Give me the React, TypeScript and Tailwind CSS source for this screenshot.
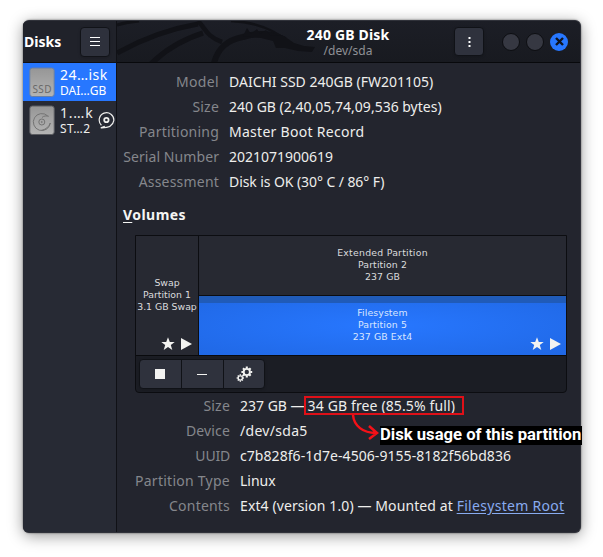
import React from 'react'

type Row = { label: string; value: React.ReactNode; labelClass: string; valueClass: string }

const driveRows: Row[] = [
	{ label: 'Model', value: 'DAICHI SSD 240GB (FW201105)', labelClass: 'tracking-[0.35px]', valueClass: '' },
	{ label: 'Size', value: '240 GB (2,40,05,74,09,536 bytes)', labelClass: 'tracking-[0.2px]', valueClass: '' },
	{ label: 'Partitioning', value: 'Master Boot Record', labelClass: 'tracking-[0.22px]', valueClass: 'tracking-[0.28px]' },
	{ label: 'Serial Number', value: '2021071900619', labelClass: 'tracking-[0.08px]', valueClass: '' },
	{ label: 'Assessment', value: 'Disk is OK (30° C / 86° F)', labelClass: 'tracking-[0.2px]', valueClass: 'tracking-[-0.08px]' },
]

const volumeRows: Row[] = [
	{
		label: 'Size',
		value: (
			<>
				<span>237 GB —</span>
				<span className="ml-[3px] tracking-[0.13px]">34 GB free (85.5% full)</span>
			</>
		),
		labelClass: 'tracking-[0.2px]',
		valueClass: '',
	},
	{ label: 'Device', value: '/dev/sda5', labelClass: 'tracking-[0.15px]', valueClass: 'tracking-[0.3px]' },
	{ label: 'UUID', value: 'c7b828f6-1d7e-4506-9155-8182f56bd836', labelClass: 'tracking-[-0.2px]', valueClass: 'tracking-[0.06px]' },
	{ label: 'Partition Type', value: 'Linux', labelClass: 'tracking-[0.26px]', valueClass: '' },
	{
		label: 'Contents',
		value: (
			<>
				Ext4 (version 1.0) — Mounted at{' '}
				<a className="tracking-[0.3px] text-[#88abf0] underline underline-offset-2">Filesystem Root</a>
			</>
		),
		labelClass: 'tracking-[0.2px]',
		valueClass: 'tracking-[0.1px]',
	},
]

function Details({ rows, labelWidth }: { rows: Row[]; labelWidth: string }) {
	return (
		<dl>
			{rows.map((row) => (
				<div key={row.label} className="flex h-[25px] items-center whitespace-nowrap text-[14px] leading-[25px]">
					<dt className={`flex shrink-0 justify-end text-[#85878c] ${labelWidth}`}>
						<span className={row.labelClass}>{row.label}</span>
					</dt>
					<dd className={`ml-2.5 text-[#eeeeec] ${row.valueClass}`}>{row.value}</dd>
				</div>
			))}
		</dl>
	)
}

function Marks() {
	return (
		<svg width="32" height="14" viewBox="0 0 32 14" fill="#f3f3f1">
			<path d="M7 .3 8.8 5h4.9L9.8 8l1.5 5L7 10.1 2.7 13l1.5-5L.3 5h4.9z" />
			<path d="M20 1v12l11-6z" />
		</svg>
	)
}

function Gear({ x, y, r }: { x: number; y: number; r: number }) {
	return (
		<g transform={`translate(${x} ${y}) scale(${r / 5})`} stroke="#f3f3f1" fill="none">
			<circle r="3" strokeWidth="1.8" />
			{[0, 45, 90, 135, 180, 225, 270, 315].map((a) => (
				<path key={a} d="M0-3.5V-5.2" strokeWidth="2" transform={`rotate(${a})`} />
			))}
		</g>
	)
}

function Dragon() {
	return (
		<svg className="absolute left-0 top-0" width="200" height="41" viewBox="0 0 200 41" fill="none" stroke="#111217">
			<path d="M0 4Q10 1 22 0" strokeWidth="3" />
			<path d="M0 32C18 22 46 9 81 3" strokeWidth="5" />
			<path d="M34 43C46 31 64 19 86 12" strokeWidth="5.5" />
			<path d="M81 0C88 7 90 16 105 21" strokeWidth="4.5" />
			<path d="M97 42C101 27 110 19 126 16C143 11 154 12 168 19" strokeWidth="6" />
			<path d="M114 0C139 1 158 9 173 22" strokeWidth="2.5" />
			<path
				d="m126 15 4-8 4 6 6-5 3 5 6-4 4 5 14 1 10 7 10 3 11 1-3 5-14-1-13-3-9 0-3-7-12-3z"
				fill="#111217"
				strokeWidth="0"
			/>
		</svg>
	)
}

function DriveIcon({ ssd }: { ssd?: boolean }) {
	return (
		<svg className="shrink-0" width="26" height="31" viewBox="0 0 26 31">
			<defs>
				<linearGradient id="drive" x2="0" y2="1">
					<stop stopColor="#969696" />
					<stop offset="1" stopColor="#b4b4b4" />
				</linearGradient>
			</defs>
			<rect x=".8" y="1" width="24.4" height="28.5" rx="2.5" fill="url(#drive)" stroke={ssd ? '#667fa9' : '#5b5c61'} />
			{ssd ? (
				<text x="13" y="25.5" textAnchor="middle" fontSize="10" textLength="19" fill="#696969" className="font-['Noto_Sans']">
					SSD
				</text>
			) : (
				<g fill="none" stroke="#747474">
					<path d="M18.6 10.8A8.5 8.5 0 1 0 21.3 18c-1.4 4-4.6 6.5-8.8 7.3" />
					<path d="M13 12.5c1.5-1.6 4.5-2 6.8-1.2" />
					<circle cx="12.8" cy="17" r="3" />
					<circle cx="12.8" cy="17" r=".5" />
				</g>
			)}
		</svg>
	)
}

export default function App() {
	return (
		<div className="h-[557px] w-[603px] overflow-hidden bg-white pl-[23px] pt-[20px] font-['Noto_Sans',sans-serif]">
			<div className="relative h-[513px] w-[558px] rounded-[7px] shadow-[0_3px_15px_rgba(0,0,0,0.4),0_0_2px_rgba(0,0,0,0.6)]">
				<div className="flex h-full w-full overflow-hidden rounded-[6px] border border-[#30323a] border-l-0 bg-[#23252e]">
					<aside className="flex w-[94px] shrink-0 flex-col border-r border-[#101116] bg-[#272a34]">
						<div className="flex h-[42px] shrink-0 items-center justify-between border-b border-[#101116] bg-[#20222a] pl-px pr-1.5">
							<h1 className="whitespace-nowrap text-[14px] font-bold text-white">Disks</h1>
							<button className="flex h-[30px] w-[30px] items-center justify-center rounded-[4px] border border-[#111318] bg-[#2e313c] shadow-sm">
								<svg width="12" height="12" viewBox="0 0 12 12" stroke="#fff">
									<path d="M1 1.5h10M1 5.5h10M1 9.5h10" />
								</svg>
							</button>
						</div>
						<div className="flex h-[38px] shrink-0 items-center bg-[#2777ff] pl-1.5 text-white">
							<DriveIcon ssd />
							<div className="ml-[5px] whitespace-nowrap">
								<p className="text-[14px] leading-[17px] tracking-[0.45px]">24…isk</p>
								<p className="text-[12px] leading-[15px]">DAI…GB</p>
							</div>
						</div>
						<div className="flex h-[38px] shrink-0 items-center pl-1.5 text-[#eeeeec]">
							<DriveIcon />
							<div className="ml-[5px] w-[38px] whitespace-nowrap">
								<p className="text-[14px] leading-[17px] tracking-[0.8px]">1.…k</p>
								<p className="text-[12px] leading-[15px] tracking-[0.4px]">ST…2</p>
							</div>
							<svg width="17" height="17" viewBox="0 0 17 17" fill="none" stroke="#eeeeec" strokeWidth="1.2">
								<path d="M3.4 13.2A7.3 7.3 0 1 1 15.8 8.6C15 13.5 10.5 16 2.8 15.8l4-1.6" />
								<circle cx="8.4" cy="8" r="2.2" strokeWidth="1.8" />
							</svg>
						</div>
					</aside>

					<main className="flex min-w-0 flex-1 flex-col">
						<header className="relative flex h-[42px] shrink-0 items-center justify-end border-b border-[#08090c] bg-gradient-to-b from-[#1c1e26] to-[#181a20] pr-3">
							<Dragon />
							<div className="relative mr-[64px] w-[84px] whitespace-nowrap text-center">
								<h2 className="text-[14px] font-bold leading-[17px] tracking-[0.18px] text-white">240 GB Disk</h2>
								<p className="text-[12px] leading-[15px] text-[#909196]">/dev/sda</p>
							</div>
							<button className="mr-[18px] flex h-[29px] w-[30px] items-center justify-center rounded-[4px] border border-[#101217] bg-[#2f323d] shadow-sm">
								<svg width="3" height="12" viewBox="0 0 3 12" fill="#fff">
									<path d="M.5 1h2v2h-2zM.5 5h2v2h-2zM.5 9h2v2h-2z" />
								</svg>
							</button>
							<div className="flex items-center gap-1.5">
								<span className="h-[18px] w-[18px] rounded-full border border-[#0d0e12] bg-[#363842]" />
								<span className="h-[18px] w-[18px] rounded-full border border-[#0d0e12] bg-[#363842]" />
								<span className="flex h-[18px] w-[18px] items-center justify-center rounded-full bg-[#2777ff]">
									<svg width="9" height="9" viewBox="0 0 9 9" stroke="#10131c" strokeWidth="2.4">
										<path d="m1 1 7 7M8 1 1 8" />
									</svg>
								</span>
							</div>
						</header>

						<section className="pt-1.5">
							<Details rows={driveRows} labelWidth="w-[102px]" />
							<h3 className="ml-1.5 mt-[9px] h-[24px] text-[14px] font-bold leading-[24px] tracking-[0.45px] text-[#f5f5f3]">
								<span className="underline underline-offset-2">V</span>olumes
							</h3>

							<div className="ml-[18px] mt-2 h-[158px] w-[432px] rounded-b-[4px] border border-[#0c0d11] bg-[#1b1d24] font-['DejaVu_Sans',sans-serif] text-[9.33px] leading-[12px] text-[#dbdcde]">
								<div className="flex h-[120px] border-b border-[#090a0d]">
									<div className="relative flex w-[63px] items-center justify-center border-r border-[#0c0d11] bg-[#272932] pb-0.5 text-center">
										<p className="whitespace-nowrap">
											Swap
											<br />
											Partition 1
											<br />
											3.1 GB Swap
										</p>
										<span className="absolute bottom-1 right-[5px]">
											<Marks />
										</span>
									</div>
									<div className="flex flex-1 flex-col text-center tracking-[0.1px]">
										<div className="flex h-[60px] items-center justify-center border-b border-[#0c0d11] bg-[#272932] pb-0.5">
											<p>
												<span className="tracking-[0.25px]">Extended Partition</span>
												<br />
												Partition 2
												<br />
												237 GB
											</p>
										</div>
										<div className="relative flex flex-1 items-center justify-center bg-[radial-gradient(ellipse_at_center,#2777ff,#2068e5)] pb-0.5 text-[#d9e6ff]">
											<div className="absolute inset-x-0 top-0 h-[7px] bg-[#205bb8]" />
											<p>
												Filesystem
												<br />
												Partition 5
												<br />
												237 GB Ext4
											</p>
											<span className="absolute bottom-1 right-1">
												<Marks />
											</span>
										</div>
									</div>
								</div>
								<div className="ml-[3px] mt-[3px] flex h-[30px] w-[126px] overflow-hidden rounded-[4px] border border-[#101217] bg-[#2f323d] shadow-sm">
									<button className="flex w-[42px] items-center justify-center border-r border-[#101217] pr-0.5">
										<span className="h-2.5 w-2.5 bg-[#f3f3f1]" />
									</button>
									<button className="flex w-[42px] items-center justify-center border-r border-[#101217] pr-0.5">
										<span className="h-px w-2.5 bg-[#f3f3f1]" />
									</button>
									<button className="flex flex-1 items-center justify-center">
										<svg width="17" height="17" viewBox="0 0 17 17">
											<Gear x={10.8} y={6} r={5.2} />
											<Gear x={4.3} y={12} r={3.5} />
										</svg>
									</button>
								</div>
							</div>
							<Details rows={volumeRows} labelWidth="w-[113px]" />
						</section>
					</main>
				</div>

				{/* Annotation over the volume details */}
				<div className="absolute left-[281px] top-[376px] h-[19px] w-[160px] border-2 border-[#df1018]" />
				<svg className="absolute left-[328px] top-[393px]" width="34" height="28" viewBox="0 0 34 28" fill="none" stroke="#f51118" strokeWidth="2.5">
					<path d="M2 2C3 13 12 20 25 20M18 13l8 7-8 6" />
				</svg>
				<p className="absolute left-[357px] top-[406px] h-[19px] w-[202px] whitespace-nowrap bg-black font-['Roboto'] text-[16.65px] font-bold leading-[18px] text-white">
					Disk usage of this partition
				</p>
			</div>
		</div>
	)
}
